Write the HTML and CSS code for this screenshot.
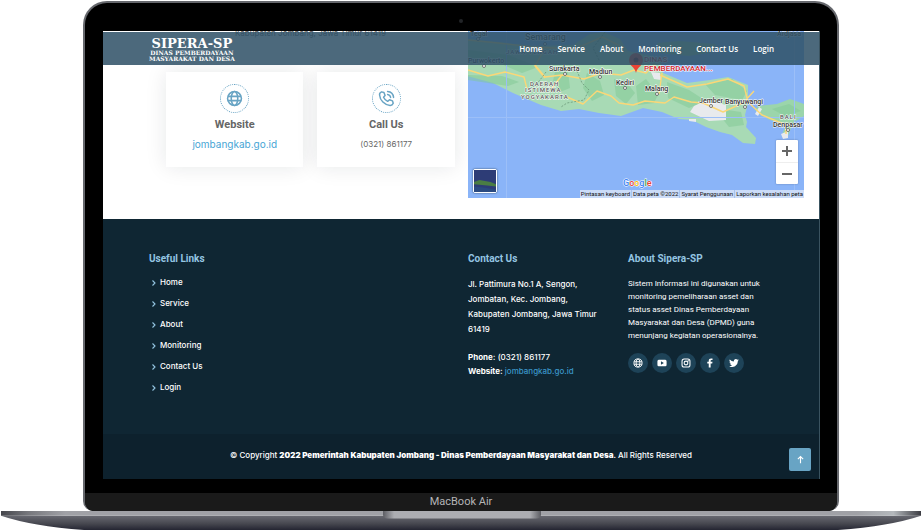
FILE: index.html
```html
<!DOCTYPE html>
<html lang="id">
<head>
<meta charset="utf-8">
<title>Sipera-SP</title>
<link rel="stylesheet" href="styles.css">
</head>
<body>
<svg class="sprite" aria-hidden="true">
  <symbol id="globe" viewBox="0 0 24 24"><g fill="none" stroke="currentColor" stroke-width="2.2"><circle cx="12" cy="12" r="9.8"/><ellipse cx="12" cy="12" rx="4.6" ry="9.8"/><path d="M2.5 9h19M2.5 15h19"/></g></symbol>
  <symbol id="chevron" viewBox="0 0 8 8"><path d="M3.500 1.500l2.500 2.500-2.500 2.500" fill="none" stroke="currentColor" stroke-width="1.1"/></symbol>
</svg>
<div class="laptop">
  <div class="lid">
    <span class="camera"></span>
    <div class="screen">
      <header class="topbar">
        <a class="logo" href="#"><span class="logo-name">SIPERA-SP</span><span class="logo-sub">DINAS PEMBERDAYAAN</span><span class="logo-sub">MASYARAKAT DAN DESA</span></a>
        <nav class="nav">
          <a href="#">Home</a><a href="#">Service</a><a href="#">About</a><a href="#">Monitoring</a><a href="#">Contact Us</a><a href="#">Login</a>
        </nav>
      </header>

      <main class="contact">
        <div class="info">
          <p class="address">Kabupaten Jombang, Jawa Timur 61419</p>
          <div class="cards">
            <article class="card">
              <span class="ring"><svg class="ring-icon" viewBox="0 0 24 24"><use href="#globe"/></svg></span>
              <h3>Website</h3>
              <a class="card-link" href="#">jombangkab.go.id</a>
            </article>
            <article class="card">
              <span class="ring"><svg class="ring-icon" viewBox="0 0 24 24" fill="none" stroke="currentColor" stroke-width="2.1" stroke-linecap="round" stroke-linejoin="round"><path d="M8.4 3.600L5 2.600C3 3.400 2 5 2.200 7c.6 7.600 7 14.200 14.800 14.800 2 .1 3.700-1 4.500-3l-1-3.400-4.300-1.600-2.600 2.200c-2.600-1.200-4.600-3.200-5.800-5.800L10 7.800z"/><path d="M13.500 6.200c2.300.3 4 2 4.300 4.300M13.500 2c4.600.4 8.100 3.900 8.500 8.500"/></svg></span>
              <h3>Call Us</h3>
              <p class="card-text">(0321) 861177</p>
            </article>
          </div>
        </div>
        <div class="map">
          <svg class="map-art" viewBox="0 0 336 167" preserveAspectRatio="xMidYMid slice" role="img" aria-label="Peta Jawa Timur">
            <rect width="336" height="167" fill="#8ab4f8"/>
            <path d="M0 8l30 3 35 4 40-1 17-11 14-2 16 7 8 12 20 4 12 5 3 13 24 10 23-3 18-3 20 8v18l-3 12 2 7-1 5 10 11-1 6-12-1-11-8-12-3-14-5-14-7-13-1-17-7-19-4-22 8-22-3-20-4-18 2-20-6-28-12-20-10-26-7-26-3-17 2z" fill="#a8dab5"/>
            <path d="M189 12l22-2 37 3-3 8-24 4-30-3zM287 79l3-4 19-2 13-5 14 5v12l-11 7-5 13-6-1 4-11-16-4-10-5z" fill="#9bd5ab"/>
            <g fill="#81c995" opacity=".5"><path d="M0 19l40 5 30 12-16 6-23-10-31-3zM88 36l12 5 2 16-10 4-7-11zM119 42l13 8 4 14-12 6-9-13zM146 48l13 4 8 10-9 11-10-8zM168 55l10-7 12 16-4 8-16 2zM199 51l22 8 17 11-17 7-21-10zM237 53l27-5 15 12-5 9-27-5zM252 78l21 3 3 13-15 2-8-10zM304 78l17-5 12 7-16 5z"/><path d="M0 44l34 1 17 6-11 4-40-6z"/></g>
            <path d="M226 75l13-6 19 5 0 15-17 1-19-9zM221 88h7v3l-7-1zM291 76l3 2-4 7-3-2zM183 41l9 1 1 7-7-1zM313 103l7-3v7l-5 1z" fill="#e8eaed"/>
            <g fill="none" stroke="#9cbff8"><path d="M38.500 0v167M326.500 0v167M0 86.500h336"/></g>
            <g fill="none" stroke="#fbd777" stroke-width="1.400" stroke-linejoin="round"><path d="M0 39l10 3 10 3 17-4 19 5 3 12M67 34l10 12 17-2 22 4 17-6 20 2 13-5 12 3 9-9M94 44l-10 13M99 66l16 7 14-13 14 5 8 7 14 2 12-4 20 2 9-6 17 5 12 1 20 9 20-9 11-12M192 44l27 12 20-3 21-5 16 7 4 16 14 13 24 10v9"/><path d="M0 9l30 3 35 4 42 2 27-12 18 9M194 42l-3 21M76 19l-9 16 10 12"/></g>
            <g fill="none" stroke="#6c9978" stroke-width=".8" stroke-dasharray="2 1.500"><path d="M78 41l-9 12-8 6M109 40l5 12 7 7-5 10-17 3-6 4M137 1l-12 16 6 12"/></g>
            <g class="map-label">
              <text x="2" y="5">Tegal</text><text x="57" y="9" class="city">Semarang</text><text x="0" y="32">Purwokerto</text>
              <text x="81" y="40">Surakarta</text><text x="121" y="43">Madiun</text><text x="148" y="54">Kediri</text><text x="177" y="60">Malang</text>
              <text x="231" y="72">Jember</text><text x="257" y="73">Banyuwangi</text><text x="305" y="96">Denpasar</text><text x="309" y="5">Ardjasa</text>
            </g>
            <g class="map-region"><text x="38" y="23">JAWA TENGAH</text><text x="62" y="55">DAERAH</text><text x="57" y="61">ISTIMEWA</text><text x="53" y="68">YOGYAKARTA</text><text x="312" y="88">BALI</text></g>
            <g fill="#fff" stroke="#555" stroke-width=".8"><circle cx="10" cy="8" r="1.500"/><circle cx="77" cy="13" r="1.500"/><circle cx="16" cy="35" r="1.500"/><circle cx="97" cy="43" r="1.500"/><circle cx="132" cy="46" r="1.500"/><circle cx="157" cy="57" r="1.500"/><circle cx="189" cy="63" r="1.500"/><circle cx="243" cy="75" r="1.500"/><circle cx="277" cy="76" r="1.500"/><circle cx="320" cy="99" r="1.500"/></g>
            <path d="M168 42c-1-6-7-7-7-13a7 7 0 0 1 14 0c0 6-6 7-7 13z" fill="#ea4335"/><circle cx="168" cy="29" r="2.500" fill="#811411"/>
            <g class="map-place"><text x="176" y="31">DINAS</text><text x="176" y="40">PEMBERDAYAAN...</text></g>
            <g class="map-brand"><text x="155" y="155"><tspan fill="#4285f4">G</tspan><tspan fill="#ea4335">o</tspan><tspan fill="#fbbc04">o</tspan><tspan fill="#4285f4">g</tspan><tspan fill="#34a853">l</tspan><tspan fill="#ea4335">e</tspan></text></g>
          </svg>
          <button class="satellite" aria-label="Tampilkan gambar satelit"><svg viewBox="0 0 20 20"><rect width="20" height="20" fill="#2d3c76"/><path d="M0 11l5-2 5 1 5 1 5 2v2l-8-1-12-1z" fill="#4a7d43"/><path d="M0 15l9 1 11 2v2H0z" fill="#2a4a80"/></svg></button>
          <div class="zoom"><button aria-label="Perbesar"><svg viewBox="0 0 12 12"><path d="M6 1v10M1 6h10"/></svg></button><button aria-label="Perkecil"><svg viewBox="0 0 12 12"><path d="M1 6h10"/></svg></button></div>
          <div class="credits"><a href="#">Pintasan keyboard</a><span>Data peta ©2022</span><a href="#">Syarat Penggunaan</a><a href="#">Laporkan kesalahan peta</a></div>
        </div>
      </main>

      <footer class="footer">
        <div class="footer-top">
          <section>
            <h4>Useful Links</h4>
            <ul class="links">
              <li><svg><use href="#chevron"/></svg><a href="#">Home</a></li>
              <li><svg><use href="#chevron"/></svg><a href="#">Service</a></li>
              <li><svg><use href="#chevron"/></svg><a href="#">About</a></li>
              <li><svg><use href="#chevron"/></svg><a href="#">Monitoring</a></li>
              <li><svg><use href="#chevron"/></svg><a href="#">Contact Us</a></li>
              <li><svg><use href="#chevron"/></svg><a href="#">Login</a></li>
            </ul>
          </section>
          <section>
            <h4>Contact Us</h4>
            <p class="place">Jl. Pattimura No.1 A, Sengon,<br>Jombatan, Kec. Jombang,<br>Kabupaten Jombang, Jawa Timur<br>61419</p>
            <p class="reach"><strong>Phone:</strong> (0321) 861177<br><strong>Website:</strong> <a href="#">jombangkab.go.id</a></p>
          </section>
          <section>
            <h4>About Sipera-SP</h4>
            <p class="about">Sistem Informasi ini digunakan untuk<br>monitoring pemeliharaan asset dan<br>status asset Dinas Pemberdayaan<br>Masyarakat dan Desa (DPMD) guna<br>menunjang kegiatan operasionalnya.</p>
            <div class="social">
              <a href="#" aria-label="Website"><svg viewBox="0 0 24 24"><use href="#globe"/></svg></a>
              <a href="#" aria-label="YouTube"><svg viewBox="0 0 24 24"><path fill="currentColor" fill-rule="evenodd" d="M4 4h16q3 0 3 4v8q0 4-3 4H4q-3 0-3-4V8q0-4 3-4zm5.500 4v8l7-4z"/></svg></a>
              <a href="#" aria-label="Instagram"><svg viewBox="0 0 24 24" fill="none" stroke="currentColor" stroke-width="2.500"><rect x="2.500" y="2.500" width="19" height="19" rx="5"/><circle cx="12" cy="12" r="4.500"/><circle cx="17.500" cy="6.500" r=".6"/></svg></a>
              <a href="#" aria-label="Facebook"><svg viewBox="0 0 24 24"><path fill="currentColor" d="M9 23V13H5.500V9H9V6.500C9 3 11 1 14.500 1H18v4h-2.500C14 5 13.500 5.700 13.500 7v2H18l-.7 4h-3.800v10z"/></svg></a>
              <a href="#" aria-label="Twitter"><svg viewBox="0 0 24 24"><path fill="currentColor" d="M23.600 4.900a9 9 0 0 1-2.700.8 4.800 4.800 0 0 0 2.100-2.700 9 9 0 0 1-3 1.200 4.800 4.800 0 0 0-8.200 4.400A13.600 13.600 0 0 1 1.900 3.600a4.800 4.800 0 0 0 1.500 6.400 4.700 4.700 0 0 1-2.200-.6 4.800 4.800 0 0 0 3.900 4.700 4.800 4.800 0 0 1-2.200.1 4.800 4.800 0 0 0 4.500 3.300A9.600 9.600 0 0 1 .3 19.500 13.600 13.600 0 0 0 21.200 7.400a10 10 0 0 0 2.400-2.500z"/></svg></a>
            </div>
          </section>
        </div>
        <div class="copyright">© Copyright <strong>2022 Pemerintah Kabupaten Jombang - Dinas Pemberdayaan Masyarakat dan Desa</strong>. All Rights Reserved</div>
      </footer>
      <a class="to-top" href="#" aria-label="Ke atas"><svg viewBox="0 0 12 12"><path d="M6 11V2M2.500 5.500L6 2l3.500 3.500"/></svg></a>
    </div>
    <div class="chin">MacBook Air</div>
  </div>
  <svg class="base" viewBox="0 0 922 20" preserveAspectRatio="none" aria-hidden="true">
    <defs>
      <linearGradient id="under" x1="0" y1="0" x2="0" y2="1"><stop offset="0" stop-color="#686971"/><stop offset=".55" stop-color="#474850"/><stop offset="1" stop-color="#242532"/></linearGradient>
      <linearGradient id="deck"><stop offset="0" stop-color="#45464c"/><stop offset=".03" stop-color="#77787d"/><stop offset=".07" stop-color="#a0a1a6"/><stop offset=".93" stop-color="#a0a1a6"/><stop offset=".97" stop-color="#b4b8bc"/><stop offset="1" stop-color="#3b3c42"/></linearGradient>
      <linearGradient id="notch"><stop offset="0" stop-color="#5c5d63"/><stop offset=".07" stop-color="#acadb2"/><stop offset=".93" stop-color="#acadb2"/><stop offset="1" stop-color="#5c5d63"/></linearGradient>
    </defs>
    <path d="M1 5h920Q890 16 838 20H84Q32 16 1 5z" fill="url(#under)"/>
    <path d="M1 0h920v5H1z" fill="url(#deck)"/>
    <path d="M383 0h158v4q0 4-5 4H388q-5 0-5-4z" fill="url(#notch)"/>
  </svg>
</div>
</body>
</html>
```
FILE: styles.css
```css
* { box-sizing: border-box; margin: 0; padding: 0; }
body { background: #fff; font-family: Inter, "Liberation Sans", sans-serif; font-size: 8px; }
a { color: inherit; text-decoration: none; }
button { border: 0; background: none; }
.sprite { display: none; }

.laptop { padding-top: 1px; }
.lid {
  position: relative;
  width: 82%;
  margin: 0 auto;
  border: 2px solid #66686d;
  border-bottom: 0;
  border-radius: 24px 24px 10px 10px;
  background: #000;
  overflow: hidden;
}
.camera {
  display: block;
  width: 4px;
  height: 4px;
  margin: 16px auto 8px;
  border-radius: 50%;
  background: #222427;
}
.screen {
  position: relative;
  margin: 0 17px 14px 18px;
  border-right: 1px solid #3a5360;
  background: #fff;
  overflow: hidden;
}

.topbar {
  position: absolute;
  inset: 1px 0 auto;
  z-index: 2;
  display: flex;
  justify-content: space-between;
  align-items: center;
  height: 33px;
  padding: 0 45px 0 46px;
  background: rgba(46, 80, 102, .86);
  color: #fff;
}
.logo {
  display: flex;
  flex-direction: column;
  align-items: center;
  padding-top: 2px;
  font-family: "DejaVu Serif", serif;
  font-weight: bold;
}
.logo-name { font-size: 13px; line-height: 12px; }
.logo-sub { font-size: 6px; line-height: 6px; }
.nav { display: flex; gap: 15px; font: 600 8px/12px "Open Sans", sans-serif; }

.contact {
  display: grid;
  grid-template-columns: 289fr 336fr;
  gap: 13px;
  padding: 0 15px 21px 63px;
}
.address {
  margin-top: -4px;
  line-height: 12px;
  text-align: center;
  color: #555;
}
.cards { display: grid; grid-template-columns: 1fr 1fr; gap: 14px; margin-top: 33px; }
.card {
  display: flex;
  flex-direction: column;
  align-items: center;
  padding: 12px 0 17px;
  background: #fff;
  box-shadow: 0 0 20px rgba(20, 30, 40, .1);
}
.ring {
  display: grid;
  place-items: center;
  width: 29px;
  height: 29px;
  border: 1px dotted #68a4c4;
  border-radius: 50%;
  color: #68a4c4;
}
.ring-icon { width: 17px; height: 17px; }
.card h3 { margin: 5px 0 6px; font: bold 11px/14px Roboto, sans-serif; color: #666; }
.card-link { font-size: 10px; line-height: 12px; color: #47a5d5; }
.card-text { font-size: 8px; line-height: 12px; color: #666; }

.map { position: relative; height: 167px; background: #8ab4f8; }
.map-art { display: block; width: 100%; height: 100%; }
.map-label, .map-place { font: 500 7px Roboto, sans-serif; fill: #333; stroke: #fff; stroke-width: 1px; paint-order: stroke; }
.map-label .city { font-size: 9px; }
.map-region { font: 500 6px Roboto, sans-serif; letter-spacing: 1px; fill: #555; stroke: #fff; stroke-width: 1px; paint-order: stroke; }
.map-place { font-size: 8px; fill: #d5232c; }
.map-brand { font: 500 9px Roboto, sans-serif; stroke: #fff; stroke-width: 1px; paint-order: stroke; }
.satellite {
  position: absolute;
  left: 5px;
  bottom: 5px;
  width: 24px;
  height: 24px;
  border: 1px solid #fff;
  border-radius: 2px;
  box-shadow: 0 0 2px #345;
}
.satellite svg { display: block; width: 100%; height: 100%; }
.zoom {
  position: absolute;
  right: 6px;
  bottom: 14px;
  width: 22px;
  background: #fff;
  border-radius: 1px;
  box-shadow: 0 0 2px rgba(0, 0, 0, .3);
}
.zoom button { display: grid; place-items: center; width: 100%; height: 22px; }
.zoom button + button { border-top: 1px solid #eee; }
.zoom svg { width: 12px; height: 12px; stroke: #666; stroke-width: 2; }
.credits {
  position: absolute;
  right: 0;
  bottom: 0;
  display: flex;
  background: #cbdcf8;
  font: 6px/8px Roboto, sans-serif;
  color: #111;
}
.credits > * { padding: 0 1px; }
.credits > * + * { border-left: 1px solid #a9c3ec; }

.footer { background: #0f2633; color: #fff; }
.footer-top {
  display: grid;
  grid-template-columns: 319fr 160fr 145fr;
  padding: 33px 46px 36px;
  font-weight: 500;
}
.footer h4 { font: bold 10px/14px Roboto, sans-serif; color: #94c5e2; }
.links { margin-top: 6px; list-style: none; }
.links li { display: flex; align-items: center; gap: 3px; line-height: 21px; }
.links svg { width: 8px; height: 8px; color: #94c5e2; }
.place { margin: 11px 0 13px; line-height: 15px; white-space: nowrap; }
.reach { line-height: 14px; }
.reach a { color: #3b96c9; }
.about { margin: 11px 0; font: 8px/13px Roboto, sans-serif; white-space: nowrap; }
.social { display: flex; gap: 4px; }
.social a {
  display: grid;
  place-items: center;
  width: 20px;
  height: 20px;
  border-radius: 50%;
  background: #1e4358;
}
.social svg { width: 10px; height: 10px; }
.copyright { padding: 14px 0 17px; background: #0d212d; font-weight: 500; line-height: 14px; text-align: center; }
.copyright strong { font-weight: 900; }
.to-top {
  position: absolute;
  right: 8px;
  bottom: 8px;
  display: grid;
  place-items: center;
  width: 22px;
  height: 23px;
  border-radius: 2px;
  background: #68a4c4;
}
.to-top svg { width: 9px; height: 9px; fill: none; stroke: #fff; stroke-width: 1.5; }

.chin { background: #1a1a1a; font: 11px/18px Roboto, sans-serif; text-align: center; color: #b5b5b7; }
.base { display: block; width: 100%; height: 19px; }
```
